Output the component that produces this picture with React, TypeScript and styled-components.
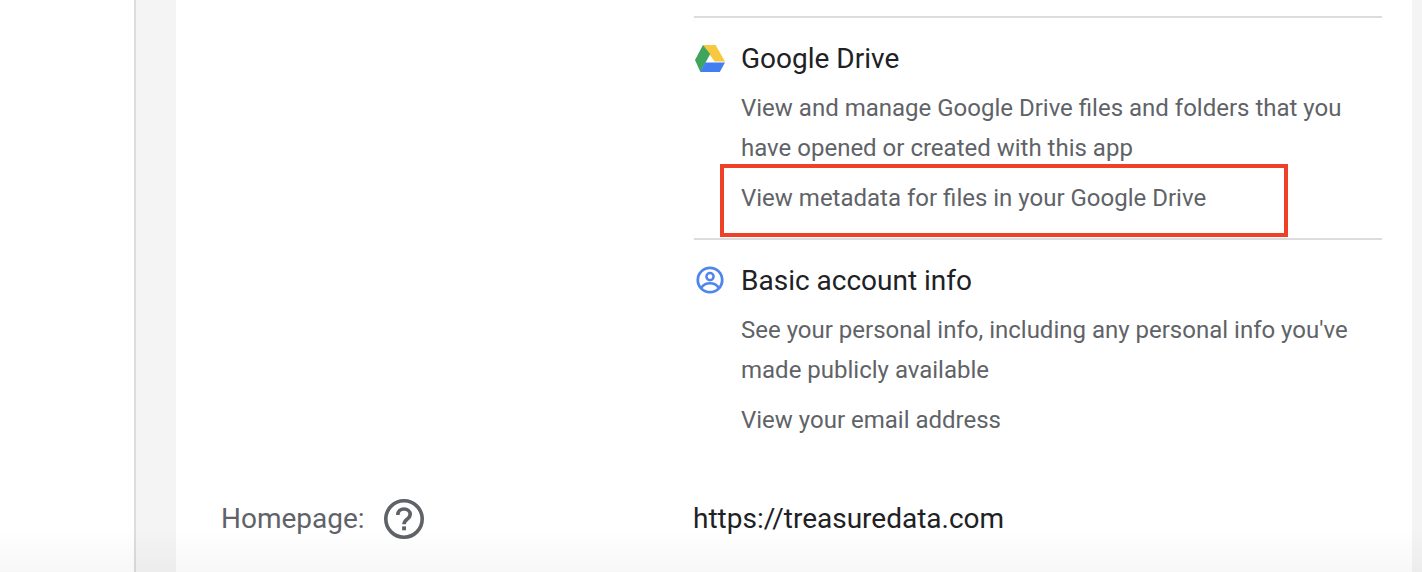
import * as React from 'react';
import styled, { createGlobalStyle } from 'styled-components';

const GlobalStyle = createGlobalStyle`
    html, body {
        margin: 0;
        padding: 0;
        height: 572px;
        overflow: hidden;
        background: #fff;
        font-family: Roboto, "Liberation Sans", sans-serif;
    }
`;

const Page = styled.div`
    position: relative;
    display: flex;
    width: 1422px;
    height: 572px;
    overflow: hidden;
    background: #fff;
`;

const LeftGutter = styled.div`
    width: 134px;
    flex: none;
`;

const Shell = styled.div`
    display: flex;
    flex: 1;
    padding: 0 10px 0 40px;
    background: #f4f4f4;
    border-left: 2px solid #dcdce0;
`;

const Card = styled.div`
    flex: 1;
    padding: 16px 30px 0 45px;
    background: #fff;
`;

const Scopes = styled.div`
    margin-left: 473px;
`;

const ScopeGroup = styled.section`
    border-top: 2px solid #dadce0;
`;

const ScopeHeader = styled.div`
    display: flex;
    align-items: center;
    height: 30px;
    padding-top: 25px;
    padding-bottom: 15px;
`;

const ScopeIcon = styled.svg`
    width: 32px;
    height: 32px;
    flex: none;
    margin-right: 15px;
`;

const ScopeTitle = styled.h3`
    margin: 2px 0 0;
    font-size: 28px;
    font-weight: 400;
    line-height: 30px;
    color: #202124;
`;

const ScopeList = styled.div`
    padding-left: 47px;
`;

const ScopeItem = styled.p`
    position: relative;
    margin: 0;
    padding-bottom: ${(props: { $gap: number }) => props.$gap}px;
    font-size: 24px;
    line-height: 40px;
    color: #5f6368;
`;

const Highlight = styled.div`
    position: absolute;
    left: -21px;
    top: -14px;
    width: 560px;
    height: 65px;
    border: 4px solid #ee4127;
`;

const Row = styled.div`
    display: flex;
    align-items: center;
    height: 44px;
    margin-top: 56px;
`;

const FieldLabel = styled.div`
    display: flex;
    align-items: center;
    width: 472px;
    flex: none;
    font-size: 28px;
    color: #5f6368;
`;

const HelpIcon = styled.svg`
    width: 42px;
    height: 42px;
    margin: 2px 0 0 18px;
`;

const FieldValue = styled.div`
    font-size: 28px;
    color: #202124;
`;

const BottomFade = styled.div`
    position: absolute;
    left: 0;
    right: 0;
    bottom: 0;
    height: 44px;
    background: linear-gradient(rgba(0, 0, 0, 0), rgba(0, 0, 0, 0.03));
    pointer-events: none;
`;

const DriveIcon = () => (
    <ScopeIcon viewBox="0 0 32 32">
        <path d="M9 3h12.6L31 19.6H20.6z" fill="#f8c93e" />
        <path d="M9 3 1 18l5.4 12 9.8-18z" fill="#3fa45e" />
        <path d="M11.2 20.5H31L25.8 30H6.2z" fill="#437ff0" />
    </ScopeIcon>
);

const AccountIcon = () => (
    <ScopeIcon viewBox="0 0 32 32">
        <circle cx="16" cy="16" r="12.2" fill="none" stroke="#4f86ec" strokeWidth="2.8" />
        <circle cx="16" cy="12.6" r="3.6" fill="none" stroke="#4f86ec" strokeWidth="2.5" />
        <path d="M7 24c2-3 5.4-4.8 9-4.8s7 1.8 9 4.8" fill="none" stroke="#4f86ec" strokeWidth="2.5" />
    </ScopeIcon>
);

const HelpGlyph = () => (
    <HelpIcon viewBox="0 0 42 42">
        <circle cx="21" cy="21" r="18.2" fill="none" stroke="#5f6368" strokeWidth="3.6" />
        <path d="M14.8 17c0-3.6 2.7-6 6.2-6s6.2 2.3 6.2 5.4c0 4.4-6.2 5-6.2 9.8" fill="none" stroke="#5f6368" strokeWidth="3.7" />
        <rect x="19.1" y="28.4" width="3.9" height="3.9" fill="#5f6368" />
    </HelpIcon>
);

export default function App() {
    return (
        <Page>
            <GlobalStyle />
            <LeftGutter />
            <Shell>
                <Card>
                    <Scopes>
                        <ScopeGroup>
                            <ScopeHeader>
                                <DriveIcon />
                                <ScopeTitle>Google Drive</ScopeTitle>
                            </ScopeHeader>
                            <ScopeList>
                                <ScopeItem $gap={10}>
                                    View and manage Google Drive files and folders that you have opened or created with this app
                                </ScopeItem>
                                <ScopeItem $gap={20}>
                                    View metadata for files in your Google Drive
                                    <Highlight />
                                </ScopeItem>
                            </ScopeList>
                        </ScopeGroup>
                        <ScopeGroup>
                            <ScopeHeader>
                                <AccountIcon />
                                <ScopeTitle>Basic account info</ScopeTitle>
                            </ScopeHeader>
                            <ScopeList>
                                <ScopeItem $gap={10}>
                                    See your personal info, including any personal info you've made publicly available
                                </ScopeItem>
                                <ScopeItem $gap={0}>View your email address</ScopeItem>
                            </ScopeList>
                        </ScopeGroup>
                    </Scopes>
                    <Row>
                        <FieldLabel>
                            Homepage:
                            <HelpGlyph />
                        </FieldLabel>
                        <FieldValue>https://treasuredata.com</FieldValue>
                    </Row>
                </Card>
            </Shell>
            <BottomFade />
        </Page>
    );
}
